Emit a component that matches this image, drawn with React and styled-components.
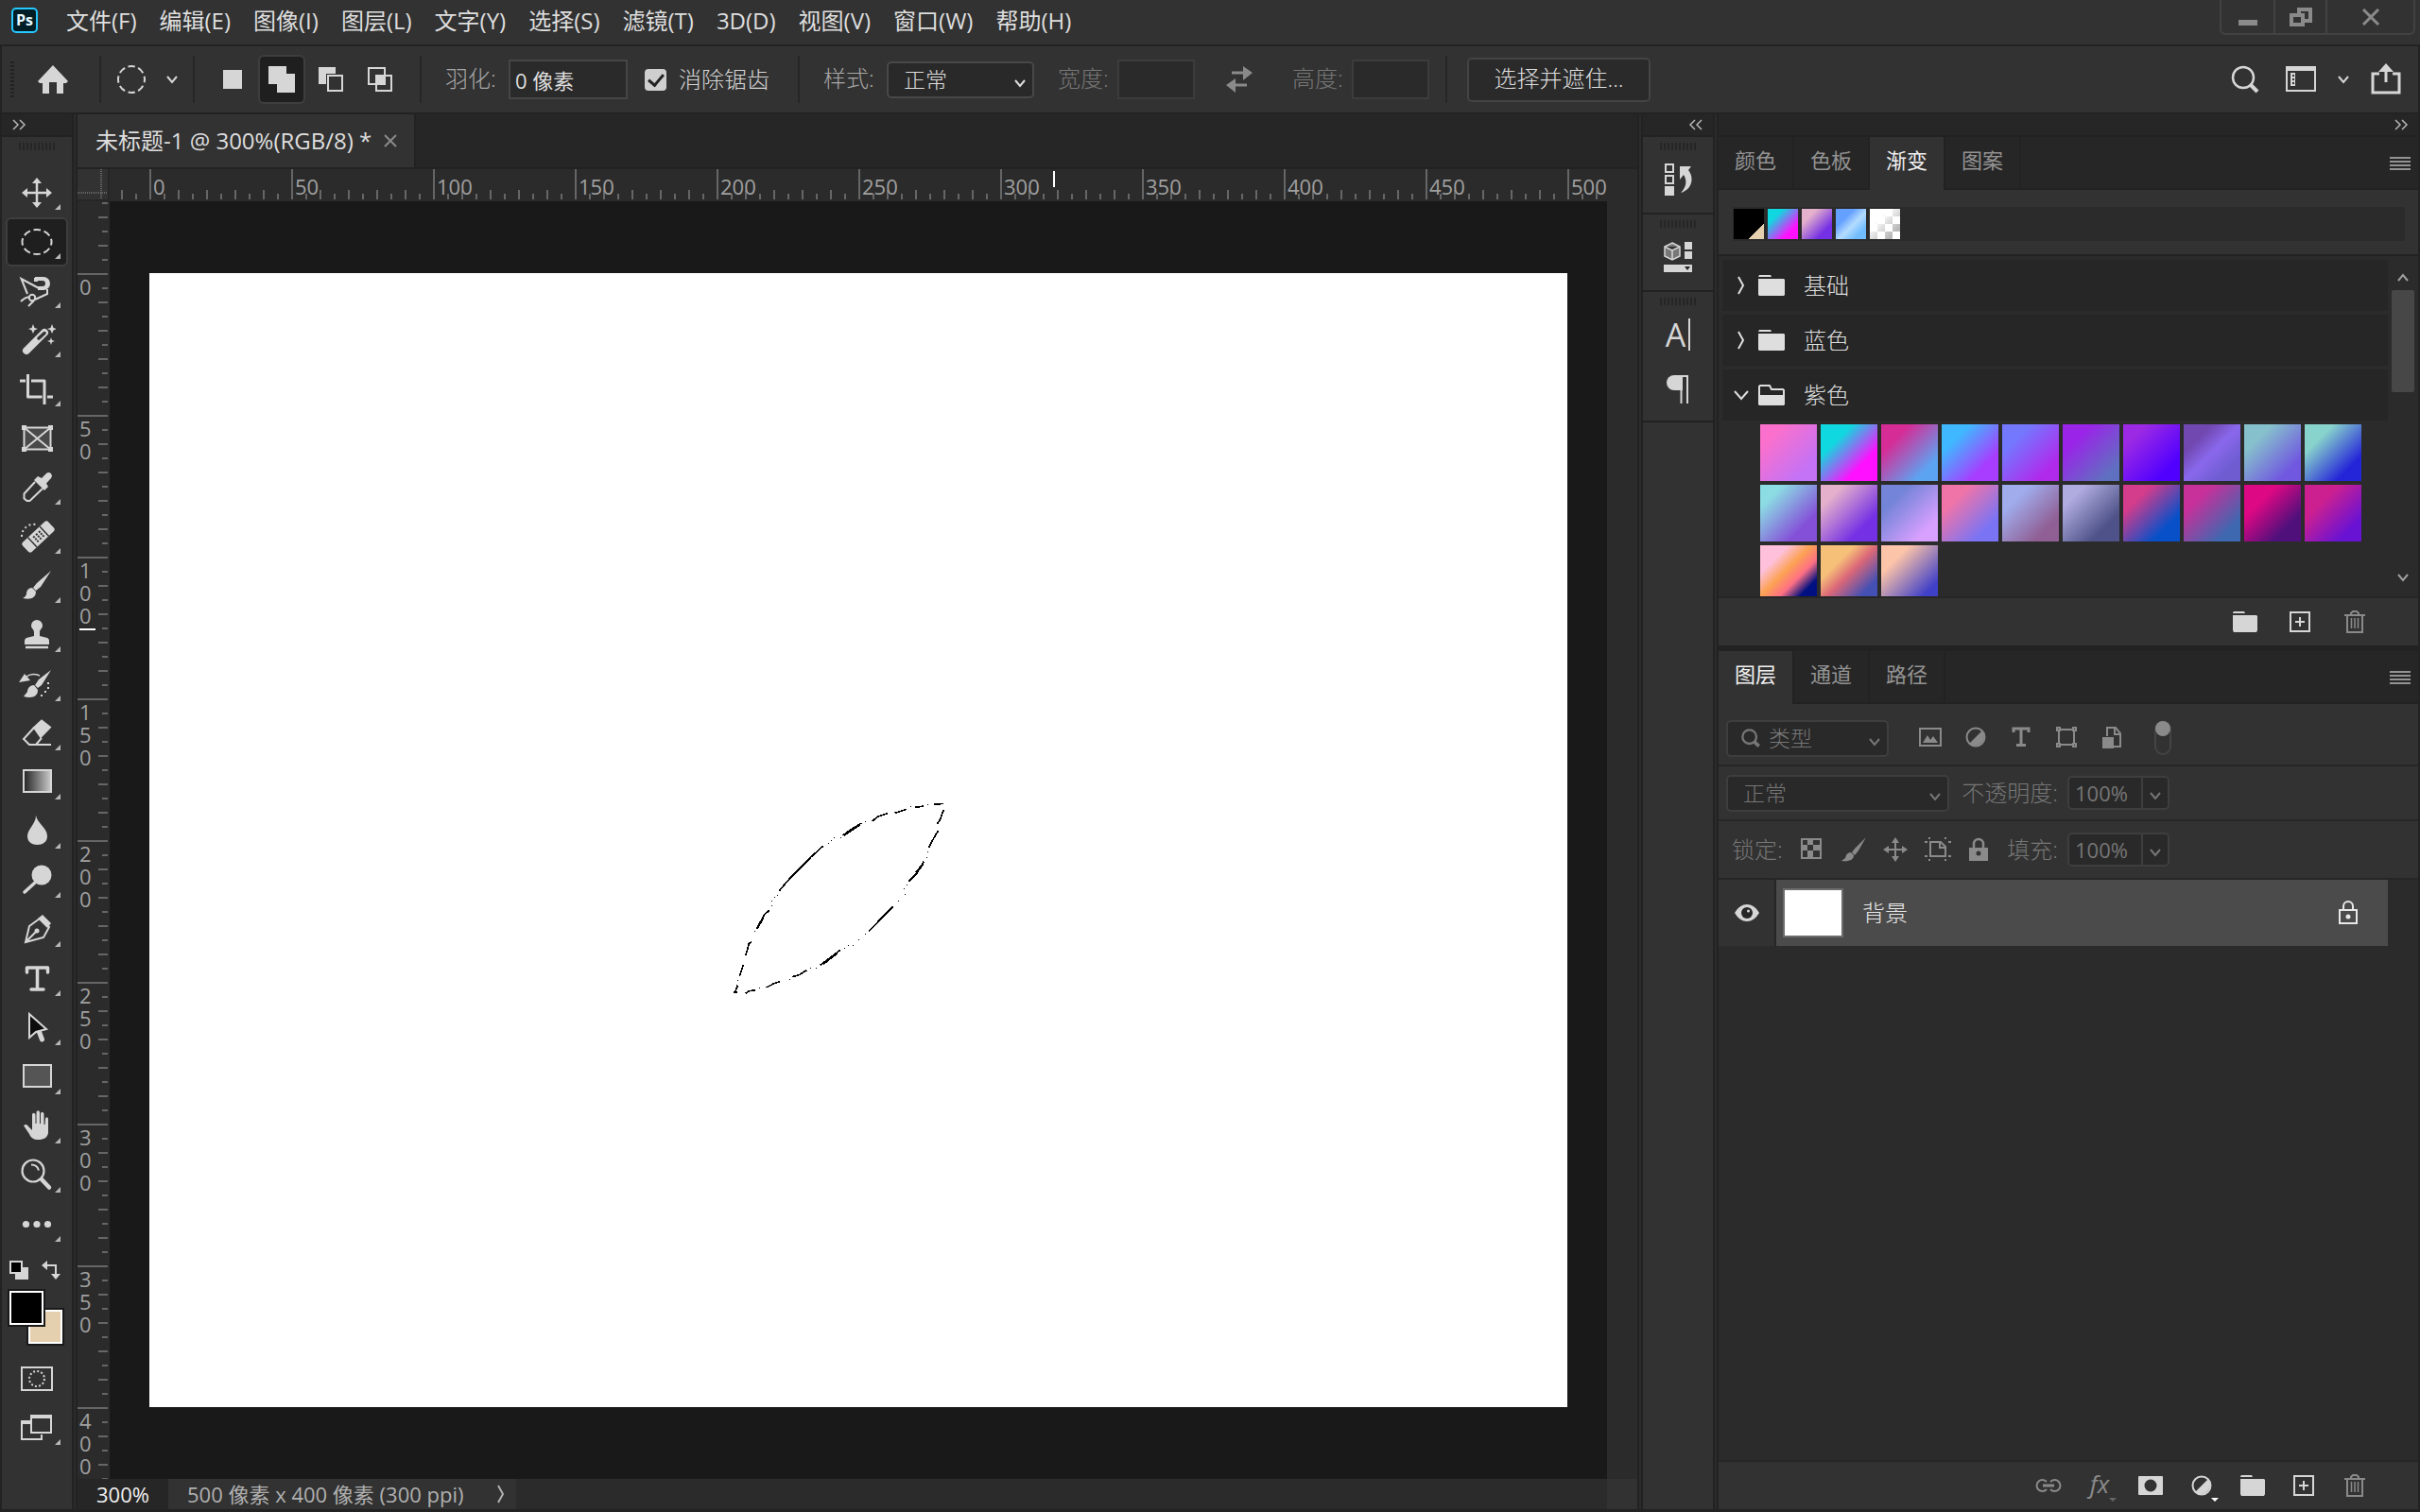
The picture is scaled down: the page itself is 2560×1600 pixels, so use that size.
import React from "react";
import styled, { createGlobalStyle, css } from "styled-components";

const colors = {
  edge: "#222222",
  dark: "#262626",
  mid: "#2b2b2b",
  panel: "#323232",
  canvas: "#191919",
  line: "#424242",
  icon: "#d6d6d6",
  dim: "#8a8a8a",
  text: "#dedede",
  label: "#a8a8a8",
  off: "#767676",
};

const menus = [
  "文件(F)",
  "编辑(E)",
  "图像(I)",
  "图层(L)",
  "文字(Y)",
  "选择(S)",
  "滤镜(T)",
  "3D(D)",
  "视图(V)",
  "窗口(W)",
  "帮助(H)",
];

const rulerX = [0, 50, 100, 150, 200, 250, 300, 350, 400, 450, 500];
const rulerY = [0, 50, 100, 150, 200, 250, 300, 350, 400];

const recents = [
  "linear-gradient(135deg, #000 74%, #e4d0ae 75%)",
  "linear-gradient(135deg, #10d8e0 25%, #ff10ff 75%)",
  "linear-gradient(135deg, #e4b0cc 25%, #7430e4 75%)",
  "linear-gradient(135deg, #64a0ff 30%, #b4dcff 55%, #70bcff 80%)",
  "linear-gradient(135deg, #fff 30%, transparent 80%), repeating-conic-gradient(#b8b8b8 0 25%, #fff 0 50%) 0 0 / 16px 16px",
];

const purples = [
  "#fb70cc 20%, #c472f6 80%",
  "#10d8e0 28%, #ff10ff 72%",
  "#d62c96 25%, #5ca4f2 80%",
  "#40b8ff 25%, #a83cff 75%",
  "#7478ff 25%, #b02aec 80%",
  "#9a24e8 25%, #6070c0 85%",
  "#9c2ae4 20%, #5000ff 80%",
  "#7048b0 25%, #8a68ec 50%, #6e5cd0 80%",
  "#86c0cc 25%, #7058e0 80%",
  "#88d4cc 25%, #2424d8 78%",
  "#8cdce4 20%, #8450d8 75%",
  "#e4b0cc 20%, #7430e4 75%",
  "#7484d8 25%, #d8a0ff 80%",
  "#f074a8 25%, #7a74f4 78%",
  "#a0acec 25%, #905f94 78%",
  "#b0ace0 20%, #4e5288 75%",
  "#d43c8c 25%, #0850c8 75%",
  "#c8309a 25%, #3e68b0 80%",
  "#dc0884 30%, #50107c 75%",
  "#cc2090 30%, #6812d4 80%",
  "#fec0da 25%, #fca254 45%, #ff7084 62%, #001080 80%",
  "#f6c078 30%, #dc6878 50%, #4450b4 80%",
  "#fcc4a8 25%, #4040c8 82%",
];

/* ---------- icons ---------- */

const Icon = ({ w = 40, h = 40, children, ...rest }) => (
  <svg width={w} height={h} viewBox={`0 0 ${w} ${h}`} fill="none" stroke="currentColor" strokeWidth="2" aria-hidden="true" {...rest}>
    {children}
  </svg>
);

const F = "currentColor";

const Chevron = () => (
  <Icon w={14} h={10} strokeWidth="2">
    <path d="M2 2l5 6 5-6" />
  </Icon>
);

const DoubleChevron = ({ left }) => (
  <Icon w={16} h={12} strokeWidth="1.5">
    <path d={left ? "M7 1L2 6l5 5M14 1L9 6l5 5" : "M2 1l5 5-5 5M9 1l5 5-5 5"} />
  </Icon>
);

const MenuLines = () => (
  <Icon w={22} h={16}>
    <path d="M0 2h22M0 6h22M0 10h22M0 14h22" />
  </Icon>
);

const FolderIcon = () => (
  <Icon w={26} h={22} stroke="none" fill={F}>
    <path d="M0 1.5L1 0h11l1 2H0zM1 4h24l1 1v15l-1 2H1l-1-2V4z" />
  </Icon>
);

const FolderWide = () => (
  <Icon w={28} h={22} stroke="none" fill={F}>
    <path d="M0 2L1 0h12l1 2zM1 4h26l1 1v16l-1 1H1l-1-1V4z" />
  </Icon>
);

const FolderOpen = () => (
  <Icon w={28} h={22}>
    <path d="M1 12V2l1-1h10l2 4h12l1 1v6" />
    <path d="M0 11h28v10l-1 1H1l-1-1z" fill={F} stroke="none" />
  </Icon>
);

const NewIcon = () => (
  <Icon w={22} h={22}>
    <path d="M1 1h20v20H1zM11 6v10M6 11h10" />
  </Icon>
);

const TrashIcon = () => (
  <Icon w={22} h={24}>
    <path d="M0 5h22M7 5V3l2-2h4l2 2v2M3 5v18h16V5" />
    <path d="M7.5 8v11M11 8v11M14.500 8v11" strokeWidth="1.500" />
  </Icon>
);

const HalfCircle = () => (
  <Icon w={22} h={22}>
    <circle cx="11" cy="11" r="9.500" />
    <path d="M18 4A10 10 0 0 1 4 18z" fill={F} stroke="none" />
  </Icon>
);

const LensIcon = ({ size = 30, bold }) => (
  <svg width={size} height={size} viewBox="0 0 30 30" fill="none" stroke="currentColor" aria-hidden="true">
    <circle cx="13" cy="13" r="11" strokeWidth={bold ? 3.5 : 2.5} />
    <path d="M20 20l8 8" strokeWidth={bold ? 5.5 : 4} />
  </svg>
);

const toolIcons = [
  [
    "移动",
    <>
      <path d="M20 8v24M8 20h24" strokeWidth="2.500" />
      <path d="M20 4l5 6H15zM20 36l5-6H15zM4 20l6-5v10zM36 20l-6-5v10z" fill={F} stroke="none" />
    </>,
  ],
  ["椭圆选框", <ellipse cx="20" cy="20" rx="15.500" ry="13" strokeDasharray="7.600 3.620" strokeDashoffset="4" />],
  [
    "磁性套索",
    <>
      <path d="M10 23L3.500 7 24 18M3 31c3-3 6-5 9-4.500M18 29l13-6v-5M17 30l-6 6" />
      <circle cx="15" cy="27" r="3.200" />
      <path d="M18 5h9a6.500 6.500 0 0 1 0 14h-6v-4h5a3 3 0 0 0 0-6h-8z" fill={F} stroke="none" />
      <path d="M18 6v3h3" />
    </>,
  ],
  [
    "魔棒",
    <>
      <path d="M9 31L28 12" strokeWidth="8" strokeLinecap="round" />
      <path d="M22 18l6-5.500" stroke={colors.panel} strokeWidth="3.500" strokeLinecap="round" />
      <path d="M16 3l1.500 4L21 8l-3.500 1.500L16 13l-1.500-3.500L11 8l3.500-1zM36 3l1.500 4L41 8l-3.500 1.500L36 13l-1.500-3.500L31 8l3.500-1zM35 17l1 3 3 1-3 1-1 3-1-3-3-1 3-1z" fill={F} stroke="none" />
    </>,
  ],
  ["裁剪", <path d="M2 11h6M10.500 4v24h15M14 11h14v25M31 28h6" strokeWidth="3" strokeLinejoin="round" />],
  [
    "图框",
    <>
      <path d="M6.500 8.500h28v23h-28z" fill="#4a4a4a" />
      <path d="M6 8l29 24M35 8L6 32" />
      <path d="M4 6h5v5H4zM32 6h5v5h-5zM4 29h5v5H4zM32 29h5v5h-5z" fill={F} stroke="none" />
    </>,
    true,
  ],
  [
    "吸管",
    <>
      <path d="M18 14L6.500 26.500v5l3 2.500h3L26 21" />
      <path d="M17 12l4-4 4 2 5-5c3-3 8 1 5 5l-5 5.500 2 3.500-4 4z" fill={F} stroke="none" />
    </>,
  ],
  [
    "修复画笔",
    <>
      <g transform="rotate(-43 21.500 20)">
        <rect x="3" y="13" width="37" height="14" rx="3" fill={F} stroke="none" />
        <path d="M13 13v14M30 13v14" stroke={colors.panel} strokeWidth="1.500" />
        <path d="M17 17h2M21 17h2M25 17h2M17 20h2M21 20h2M25 20h2M17 23h2M21 23h2M25 23h2" stroke={colors.panel} />
      </g>
      <path d="M4 20c0-9 7-14 15-13" strokeDasharray="2 3" />
    </>,
  ],
  [
    "画笔",
    <path d="M35 4L20 17l-4 5 3 3 5-4zM15 22c-5 0-6 4-6 7-1 2-2 3-4 4 8 2 14 0 14-7z" fill={F} stroke="none" />,
  ],
  [
    "仿制图章",
    <>
      <path d="M20 4a6 6 0 0 1 6 6c0 3-3 4-3 7v4l8 2q2 1 2 3v4H7v-4q0-2 2-3l8-2v-4c0-3-3-4-3-7a6 6 0 0 1 6-6z" fill={F} stroke="none" />
      <path d="M8 33h24" strokeWidth="2.500" />
    </>,
  ],
  [
    "历史记录画笔",
    <>
      <path d="M35 5L22 15l-4 6 3 3 4-3zM17 21c-5 0-7 4-7 7l-4 5c8 2 15 1 15-7z" fill={F} stroke="none" />
      <path d="M1 18L7 9l6 7z" fill={F} stroke="none" />
      <path d="M9 12c4-3 9-3 14-1" strokeWidth="1.500" />
      <path d="M32 18v2M32 23v2M29 27v2M25 31v2" />
    </>,
  ],
  [
    "橡皮擦",
    <>
      <path d="M17 14L25 6.500l9 7L24 24z" fill={F} />
      <path d="M17 14L6 26l6 6h7l6-7M12 32h23" />
    </>,
  ],
  [
    "渐变",
    <>
      <defs>
        <linearGradient id="toolGradient">
          <stop offset="0" stopColor="#222" />
          <stop offset="1" stopColor="#ccc" />
        </linearGradient>
      </defs>
      <path d="M6 7h29v23H6z" fill="url(#toolGradient)" />
    </>,
  ],
  ["模糊", <path d="M19 3c2 9 12 13 12 22 0 6-5 9-10.500 9S10 31 10 25C10 17 19 12 19 3z" fill={F} stroke="none" />],
  [
    "减淡",
    <>
      <circle cx="25" cy="14" r="10.500" fill={F} stroke="none" />
      <path d="M18 22L7 32" strokeWidth="3.500" strokeLinecap="round" />
    </>,
  ],
  [
    "钢笔",
    <>
      <path d="M23 8l10 9-6 11L8 33l4-17zM9 32l10-10" />
      <circle cx="20" cy="21" r="2.500" fill={F} stroke="none" />
      <path d="M21 8l5-4 9 9-4 5z" fill={F} stroke="none" />
    </>,
  ],
  ["横排文字", <path d="M9.500 13V8h22v5M20.500 8v23M14 31h13" strokeWidth="3.500" strokeLinecap="round" strokeLinejoin="round" />],
  [
    "路径选择",
    <>
      <path d="M21 20l4.500 12" strokeWidth="5" strokeLinecap="round" />
      <path d="M12 5v25l7-6 11-3z" fill="#0c0c0c" />
    </>,
  ],
  ["矩形", <path d="M6 7h29v23H6z" fill="#555" />],
  [
    "抓手",
    <path
      d="M6 19c2-2 4-1 5 1l4 4V8c0-3 3-3 3.500 0v9h1V5.500c0-3 3.500-3 3.500 0V17h1V7c0-3 3-3 3.500 0v11h1l.5-6c.5-2.500 3-2 3 .5L32 27c-1 5-5 7-10 7-6 0-8-2-10-6z"
      fill={F}
      stroke="none"
    />,
  ],
  [
    "缩放",
    <>
      <circle cx="16" cy="15" r="11.500" strokeWidth="2.200" />
      <path d="M14 8.500c4 0 7 2 8 6" />
      <path d="M25 24l8 8.500" strokeWidth="4.500" strokeLinecap="round" />
    </>,
  ],
  [
    "编辑工具栏",
    <g fill={F} stroke="none">
      <circle cx="8.500" cy="19.500" r="3.600" />
      <circle cx="20" cy="19.500" r="3.600" />
      <circle cx="31.500" cy="19.500" r="3.600" />
    </g>,
  ],
];

const combineIcons = [
  ["新选区", <path d="M4 4h20v20H4z" fill={F} stroke="none" />],
  ["添加到选区", <path d="M0 0h19v8h9v20H9v-9H0z" fill={F} stroke="none" />],
  [
    "从选区减去",
    <>
      <path d="M1 1h18v7H9v11H1z" fill={F} stroke="none" />
      <path d="M11 10h15v16H11z" />
    </>,
  ],
  [
    "与选区交叉",
    <>
      <path d="M2 2h17v17H2zM10 10h16v16H10z" />
      <path d="M9 9h11v11H9z" fill={F} stroke="none" />
    </>,
  ],
];

const filterIcons = [
  [
    "像素图层",
    <>
      <path d="M1 2h22v18H1z" />
      <path d="M4 17l5-8 3 5 3-4 5 7z" fill={F} stroke="none" />
    </>,
  ],
  [
    "调整图层",
    <>
      <circle cx="12" cy="11" r="9.500" />
      <path d="M19 4A10 10 0 0 1 5 18z" fill={F} stroke="none" />
    </>,
  ],
  ["文字图层", <path d="M4 6V2h16v4M12 2v17M7 19.500h10" strokeWidth="3" />],
  [
    "形状图层",
    <>
      <path d="M4 3h16v16H4z" />
      <path d="M1 0h5v5H1zM18 0h5v5h-5zM1 17h5v5H1zM18 17h5v5h-5z" fill={F} stroke="none" />
      <path d="M3 2h1v1H3zM20 2h1v1h-1zM3 19h1v1H3zM20 19h1v1h-1z" fill={colors.panel} stroke="none" />
    </>,
  ],
  [
    "智能对象",
    <>
      <path d="M7 10V1h9l5 6v14h-7M15 1v7h6" />
      <path d="M2 11h12v12H2z" fill={F} stroke="none" />
    </>,
  ],
];

const lockIcons = [
  [
    "锁定透明像素",
    <>
      <path d="M2 2h20v20H2z" />
      <path d="M8 2h6v6H8zM2 8h6v6H2zM14 8h8v6h-8zM8 14h6v7H8z" fill={F} stroke="none" />
    </>,
  ],
  ["锁定图像像素", <path d="M26 0L14 12l-3 4 3 3 4-5zM10 16c-4 0-5 3-6 6l-4 3c8 1 13-1 13-6z" fill={F} stroke="none" />],
  [
    "锁定位置",
    <>
      <path d="M13 4v18M4 13h18" />
      <path d="M13 0l4 6H9zM13 26l4-6H9zM0 13l6-4v8zM26 13l-6-4v8z" fill={F} stroke="none" />
    </>,
  ],
  [
    "防止自动嵌套",
    <>
      <path d="M6 5h11l5 5v10H6zM16 5v6h6" />
      <path d="M0 5h3M25 20h3M0 20h3M25 5h3M5 0v2M22 0v2M5 23v2M22 23v2" />
    </>,
  ],
  [
    "锁定全部",
    <>
      <path d="M8 11V7a5 5 0 0 1 10 0v4" strokeWidth="2.500" />
      <path d="M3 11h20v14H3z" fill={F} stroke="none" />
      <circle cx="13" cy="17" r="2.500" fill={colors.panel} stroke="none" />
    </>,
  ],
];

/* ---------- pieces ---------- */

function Dropdown({ id, value, width, dim, children }) {
  return (
    <SelectWrap $width={width} $dim={dim}>
      {children}
      <select id={id} aria-label={value} defaultValue={value}>
        <option>{value}</option>
      </select>
      <Chevron />
    </SelectWrap>
  );
}

function Percent({ id }) {
  return (
    <PercentBox>
      <input id={id} defaultValue="100%" />
      <button type="button" aria-label="滑块">
        <Chevron />
      </button>
    </PercentBox>
  );
}

function Toolbar() {
  return (
    <Dock>
      <DockHeader>
        <DoubleChevron />
      </DockHeader>
      <ToolPanel>
        <Grip />
        <ToolList>
          {toolIcons.map(([name, drawing, single], i) => (
            <ToolButton key={name} type="button" aria-label={name} $active={i === 1} $single={single}>
              <Icon>{drawing}</Icon>
            </ToolButton>
          ))}
        </ToolList>
        <ColorMinis>
          <Icon w={20} h={20}>
            <path d="M6 7h14v13H6z" fill={F} stroke="none" />
            <path d="M1 1h12v12H1z" fill="#000" />
          </Icon>
          <Icon w={20} h={20}>
            <path d="M4 5h11v10" />
            <path d="M0 5l6-5v10zM15 20l-5-6h10z" fill={F} stroke="none" />
          </Icon>
        </ColorMinis>
        <Swatches>
          <ColorChip type="button" $color="#e4d0ae" $back aria-label="背景色" />
          <ColorChip type="button" $color="#000" aria-label="前景色" />
        </Swatches>
        <ToolButton type="button" aria-label="快速蒙版" $single>
          <Icon>
            <path d="M4 8h32v24H4z" />
            <circle cx="20" cy="20" r="8" strokeDasharray="2 2.190" />
          </Icon>
        </ToolButton>
        <ToolButton type="button" aria-label="屏幕模式">
          <Icon>
            <path d="M12 14H4v18h21v-5" />
            <path d="M3 12h10v4H3zM13 6h23v4H13z" fill={F} stroke="none" />
            <path d="M14 7h21v18H14z" />
          </Icon>
        </ToolButton>
      </ToolPanel>
    </Dock>
  );
}

function OptionsBar() {
  return (
    <Options>
      <OptionsGrip />
      <HomeButton type="button" aria-label="主页">
        <Icon w={32} h={30} stroke="none" fill={F}>
          <path d="M16 0l16 17-2 2h-3v11h-7V18h-8v12H5V19H2l-2-2z" />
        </Icon>
      </HomeButton>
      <Divider />
      <CurrentTool type="button" aria-label="当前工具">
        <Icon w={32} h={32}>
          <circle cx="16" cy="16" r="14" strokeDasharray="7.400 3.600" strokeDashoffset="4" />
        </Icon>
        <Chevron />
      </CurrentTool>
      <Divider />
      <CombineGroup>
        {combineIcons.map(([name, drawing], i) => (
          <CombineButton key={name} type="button" aria-label={name} $active={i === 1}>
            <Icon w={28} h={28}>
              {drawing}
            </Icon>
          </CombineButton>
        ))}
      </CombineGroup>
      <Divider />
      <OptionGroup>
        <FieldLabel htmlFor="feather">羽化:</FieldLabel>
        <OptionInput id="feather" defaultValue="0 像素" $width={126} />
        <CheckLabel>
          <input type="checkbox" defaultChecked />
          消除锯齿
        </CheckLabel>
      </OptionGroup>
      <Divider />
      <OptionGroup>
        <FieldLabel htmlFor="style">样式:</FieldLabel>
        <Dropdown id="style" value="正常" width={156} />
        <FieldLabel htmlFor="selWidth" $off>
          宽度:
        </FieldLabel>
        <OptionInput id="selWidth" disabled $width={82} />
        <SwapButton type="button" aria-label="互换宽高">
          <Icon w={28} h={28} strokeWidth="3">
            <path d="M6 7h14M8 20h14" />
            <path d="M18 0l10 7-10 8zM10 13L0 20l10 8z" fill={F} stroke="none" />
          </Icon>
        </SwapButton>
        <FieldLabel htmlFor="selHeight" $off>
          高度:
        </FieldLabel>
        <OptionInput id="selHeight" disabled $width={82} />
      </OptionGroup>
      <Divider />
      <MaskButton type="button">选择并遮住...</MaskButton>
      <RightTools>
        <LensIcon />
        <Icon w={34} h={28}>
          <path d="M2 2h30v24H2z" />
          <path d="M1 0h32v5H1z" fill={F} stroke="none" />
          <path d="M6 7h5v14H6z" fill={F} stroke="none" />
          <path d="M8 10h2M8 14h2M8 18h2" stroke={colors.panel} />
        </Icon>
        <Chevron />
        <Icon w={34} h={34} strokeWidth="3">
          <path d="M10 11H3v20h28V11h-7M17 20V6" />
          <path d="M17 0l8 9H9z" fill={F} stroke="none" />
        </Icon>
      </RightTools>
    </Options>
  );
}

function Selection() {
  const dashes =
    "M112 692l9-24M127 640l12-37M147 572l10-37 8-5M181 490l24-45 16-15M253 368l39-46 58-58 42-38M455 192l23-17 36-22M548 147l17-14 31-11M620 121l37-12M685 103l26-4M745 94l28-3M775 110l-12 33-8 12M757 178l-20 34-9 18M712 275l-22 37-26 26M614 418l-77 78M446 556l-28 22-35 26M340 620l-22 14-23 7M256 656l-21 7-23 12M178 683l-20 3-12 8";
  const dots = [
    [119, 650], [173, 495], [229, 415], [227, 398], [236, 386], [246, 380], [407, 217], [416, 207], [425, 199], [446, 199],
    [524, 147], [668, 100], [722, 92], [722, 242], [721, 260], [658, 349], [648, 360], [650, 379], [631, 398], [524, 505],
    [505, 523], [487, 541], [470, 539], [458, 549], [368, 613], [350, 612], [286, 648], [188, 675],
  ];
  return (
    <Marquee viewBox="0 0 900 780" fill="none" stroke="#000" shapeRendering="crispEdges">
      <path d={dashes} strokeWidth="5" />
      <path d="M290 324l62-60M458 192l50-34M185 484l16-30M708 284l-20 26M436 566l-44 34M109 690h12" strokeWidth="7" />
      {dots.map(([x, y]) => (
        <rect key={`${x}-${y}`} x={x} y={y} width="3" height="3" fill="#000" stroke="none" />
      ))}
    </Marquee>
  );
}

function Document() {
  return (
    <DocumentArea>
      <DocTabs>
        <DocTab>
          未标题-1 @ 300%(RGB/8) *
          <button type="button" aria-label="关闭">
            <Icon w={14} h={14}>
              <path d="M1 1l12 12M13 1L1 13" />
            </Icon>
          </button>
        </DocTab>
      </DocTabs>
      <DocGrid>
        <RulerCorner />
        <TopRuler>
          {rulerX.map((n) => (
            <span key={n}>{n}</span>
          ))}
          <TopMarker />
        </TopRuler>
        <ScrollTrack />
        <LeftRuler>
          {rulerY.map((n) => (
            <span key={n}>{n}</span>
          ))}
          <LeftMarker />
        </LeftRuler>
        <Pasteboard>
          <Artboard>
            <Selection />
          </Artboard>
        </Pasteboard>
        <ScrollTrack />
      </DocGrid>
      <StatusBar>
        <ZoomLevel>300%</ZoomLevel>
        <DocInfo>
          500 像素 x 400 像素 (300 ppi)
          <Icon w={8} h={20}>
            <path d="M1 1l5 9-5 9" />
          </Icon>
        </DocInfo>
        <StatusEnd />
      </StatusBar>
    </DocumentArea>
  );
}

function IconDock() {
  return (
    <Dock>
      <DockHeader $right>
        <DoubleChevron left />
      </DockHeader>
      <IconPanel>
        <Grip />
        <button type="button" aria-label="历史记录">
          <Icon w={32} h={36}>
            <path d="M3 2h8v8H3zM3 14h8v8H3z" />
            <path d="M2 25h10v10H2z" fill={F} stroke="none" />
            <path d="M18 4h12l-3 4c6 7 5 20-8 24 6-6 7-13 3-19l-4 5z" fill={F} stroke="none" />
          </Icon>
        </button>
      </IconPanel>
      <IconPanel>
        <Grip />
        <button type="button" aria-label="库">
          <Icon w={32} h={36}>
            <path d="M10 3l8 4v10l-8 4-8-4V7zM2 7l8 4 8-4M10 11v10" fill="#777" strokeWidth="1.500" />
            <path d="M23 2h8v8h-8zM23 12h8v8h-8zM1 26h30v8H1z" fill={F} stroke="none" />
            <path d="M23 28h6l-3 4z" fill="#222" stroke="none" />
          </Icon>
        </button>
      </IconPanel>
      <IconPanel>
        <Grip />
        <CharacterButton type="button" aria-label="字符">
          A
        </CharacterButton>
        <button type="button" aria-label="段落">
          <Icon w={32} h={36}>
            <path d="M21 3H12a8 8 0 0 0 0 16h9z" fill={F} stroke="none" />
            <path d="M19.500 4v29M26 3v30M12 4h15" />
          </Icon>
        </button>
      </IconPanel>
      <DockFill />
    </Dock>
  );
}

function GradientPanel() {
  return (
    <Panel>
      <TabRow>
        <Tab type="button">颜色</Tab>
        <Tab type="button">色板</Tab>
        <Tab type="button" $active>
          渐变
        </Tab>
        <Tab type="button">图案</Tab>
        <TabMenu type="button" aria-label="面板菜单">
          <MenuLines />
        </TabMenu>
      </TabRow>
      <RecentBox>
        <RecentStrip>
          {recents.map((g) => (
            <RecentSwatch key={g} $fill={g} />
          ))}
        </RecentStrip>
      </RecentBox>
      <ListArea>
        <List>
          {["基础", "蓝色", "紫色"].map((name, i) => (
            <GroupRow key={name} type="button">
              <Icon w={16} h={20}>
                <path d={i === 2 ? "M1 6l7 8 7-8" : "M5 1l5 9-5 9"} />
              </Icon>
              {i === 2 ? <FolderOpen /> : <FolderWide />}
              {name}
            </GroupRow>
          ))}
          <SwatchGrid>
            {purples.map((g) => (
              <GradientSwatch key={g} $stops={g} />
            ))}
          </SwatchGrid>
        </List>
        <Scrollbar>
          <Icon w={14} h={10}>
            <path d="M2 8l5-6 5 6" />
          </Icon>
          <Thumb />
          <Chevron />
        </Scrollbar>
      </ListArea>
      <PanelFooter $gap={34}>
        <FooterButton type="button" aria-label="新建组">
          <FolderIcon />
        </FooterButton>
        <FooterButton type="button" aria-label="新建渐变">
          <NewIcon />
        </FooterButton>
        <FooterButton type="button" aria-label="删除渐变" $off>
          <TrashIcon />
        </FooterButton>
      </PanelFooter>
    </Panel>
  );
}

function LayersPanel() {
  return (
    <Panel $grow>
      <TabRow>
        <Tab type="button" $active>
          图层
        </Tab>
        <Tab type="button">通道</Tab>
        <Tab type="button">路径</Tab>
        <TabMenu type="button" aria-label="面板菜单">
          <MenuLines />
        </TabMenu>
      </TabRow>
      <LayerRow $height={66} $top={8}>
        <Dropdown id="kind" value="类型" width={172} dim>
          <LensIcon size={20} bold />
        </Dropdown>
        <FilterIcons>
          {filterIcons.map(([name, drawing]) => (
            <button key={name} type="button" aria-label={name}>
              <Icon w={24} h={24}>
                {drawing}
              </Icon>
            </button>
          ))}
        </FilterIcons>
        <Toggle type="button" aria-label="打开或关闭图层滤镜" />
      </LayerRow>
      <LayerRow $height={58}>
        <Dropdown id="blend" value="正常" width={236} dim />
        <LayerLabel htmlFor="opacity">不透明度:</LayerLabel>
        <Percent id="opacity" />
      </LayerRow>
      <LayerRow $height={62}>
        <LockLabel>锁定:</LockLabel>
        <LockIcons>
          {lockIcons.map(([name, drawing]) => (
            <button key={name} type="button" aria-label={name}>
              <Icon w={28} h={26}>
                {drawing}
              </Icon>
            </button>
          ))}
        </LockIcons>
        <LayerLabel htmlFor="fill">填充:</LayerLabel>
        <Percent id="fill" />
      </LayerRow>
      <LayerList>
        <EyeCell type="button" aria-label="可见性">
          <Icon w={26} h={18} stroke="none" fill={F}>
            <path d="M0 9C7-3 19-3 26 9 19 21 7 21 0 9z" />
            <circle cx="13" cy="9" r="6" fill={colors.dark} />
            <circle cx="14.500" cy="7" r="1.500" />
          </Icon>
        </EyeCell>
        <LayerItem>
          <LayerThumb />
          背景
          <Icon w={22} h={26}>
            <path d="M6 10V6a5 5 0 0 1 10 0v4M2 10h18v14H2z" />
            <circle cx="11" cy="17" r="2.500" fill={F} stroke="none" />
          </Icon>
        </LayerItem>
      </LayerList>
      <LayerSpace />
      <PanelFooter $gap={30}>
        <FooterButton type="button" aria-label="链接图层" $off>
          <Icon w={28} h={16}>
            <path d="M12 4A6 6 0 1 0 12 12M16 4a6 6 0 1 1 0 8" />
            <path d="M8 8h12" strokeWidth="3" />
          </Icon>
        </FooterButton>
        <FooterButton type="button" aria-label="图层样式" $off $menu>
          <em>fx</em>
        </FooterButton>
        <FooterButton type="button" aria-label="添加蒙版">
          <Icon w={26} h={20} stroke="none">
            <rect width="26" height="20" rx="1" fill={F} />
            <circle cx="13" cy="10" r="6.500" fill={colors.panel} />
          </Icon>
        </FooterButton>
        <FooterButton type="button" aria-label="调整图层" $menu>
          <HalfCircle />
        </FooterButton>
        <FooterButton type="button" aria-label="新建组">
          <FolderIcon />
        </FooterButton>
        <FooterButton type="button" aria-label="新建图层">
          <NewIcon />
        </FooterButton>
        <FooterButton type="button" aria-label="删除图层" $off>
          <TrashIcon />
        </FooterButton>
      </PanelFooter>
    </Panel>
  );
}

function App() {
  return (
    <>
      <GlobalStyle />
      <Window>
        <MenuBar>
          <Logo>Ps</Logo>
          {menus.map((m) => (
            <MenuItem key={m} type="button">
              {m}
            </MenuItem>
          ))}
          <WindowButtons>
            <button type="button" aria-label="最小化">
              <Icon w={20} h={20} stroke="none" fill={F}>
                <path d="M0 13h20v6H0z" />
              </Icon>
            </button>
            <button type="button" aria-label="还原">
              <Icon w={24} h={22} strokeWidth="4">
                <path d="M10 8V3h12v12h-6M2 9h12v10H2z" />
              </Icon>
            </button>
            <button type="button" aria-label="关闭">
              <Icon w={20} h={18} strokeWidth="3">
                <path d="M2 1l16 16M18 1L2 17" />
              </Icon>
            </button>
          </WindowButtons>
        </MenuBar>
        <OptionsBar />
        <Workspace>
          <Toolbar />
          <Document />
          <IconDock />
          <Dock>
            <DockHeader $right>
              <DoubleChevron />
            </DockHeader>
            <GradientPanel />
            <LayersPanel />
          </Dock>
        </Workspace>
      </Window>
    </>
  );
}

/* ---------- styles ---------- */

const GlobalStyle = createGlobalStyle`
  * {
    box-sizing: border-box;
  }
  body {
    margin: 0;
    background: ${colors.edge};
    color: ${colors.text};
    font: 24px/32px "Open Sans", "Noto Sans CJK SC", sans-serif;
  }
  button, input, select {
    margin: 0;
    padding: 0;
    border: 0;
    border-radius: 0;
    background: none;
    color: inherit;
    font: inherit;
  }
  svg {
    display: block;
    flex: none;
  }
`;

const Window = styled.div`
  display: flex;
  flex-direction: column;
  height: 100vh;
  overflow: hidden;
  padding-bottom: 3px;
`;

const MenuBar = styled.nav`
  display: flex;
  flex: none;
  height: 47px;
  padding-left: 12px;
  padding-right: 5px;
  background: ${colors.panel};
`;

const Logo = styled.div`
  width: 28px;
  height: 27px;
  margin: 8px 18px 0 0;
  border: 2px solid #26c9ff;
  border-radius: 5px;
  background: #001e26;
  color: #e8faff;
  font-size: 16px;
  font-weight: 700;
  line-height: 22px;
  text-align: center;
`;

const MenuItem = styled.button`
  padding: 0 12px 3px;
  height: 47px;
  white-space: nowrap;
`;

const WindowButtons = styled.div`
  display: flex;
  height: 37px;
  margin-left: auto;
  border: 2px solid ${colors.line};
  border-top: 0;
  border-radius: 0 0 6px 6px;
  color: ${colors.dim};

  button {
    display: flex;
    align-items: center;
    justify-content: center;
    width: 55px;
  }
  button + button {
    border-left: 2px solid ${colors.line};
  }
  button:last-child {
    width: 93px;
  }
`;

const Options = styled.div`
  display: flex;
  align-items: center;
  flex: none;
  height: 70px;
  margin: 2px;
  padding-left: 9px;
  background: ${colors.panel};
  color: ${colors.icon};
`;

const OptionsGrip = styled.div`
  width: 4px;
  height: 38px;
  background: repeating-linear-gradient(${colors.edge} 0 2px, transparent 2px 4px);
`;

const HomeButton = styled.button`
  display: flex;
  justify-content: center;
  width: 82px;
  margin-right: 8px;
`;

const Divider = styled.div`
  flex: none;
  width: 2px;
  height: 50px;
  background: ${colors.dark};
`;

const CurrentTool = styled.button`
  display: flex;
  align-items: center;
  gap: 20px;
  padding: 0 15px 0 16px;
`;

const CombineGroup = styled.div`
  display: flex;
  gap: 2px;
  padding: 0 17px 0 15px;
`;

const activeBox = css`
  border: 2px solid #3e3e3e;
  border-radius: 6px;
  background: #1f1f1f;
`;

const CombineButton = styled.button`
  display: flex;
  align-items: center;
  justify-content: center;
  width: 50px;
  height: 52px;
  ${({ $active }) => $active && activeBox}
`;

const OptionGroup = styled.div`
  display: flex;
  align-items: center;
  padding: 0 17px 0 25px;
`;

const FieldLabel = styled.label`
  width: ${({ $off }) => ($off ? 63 : 67)}px;
  margin-left: ${({ $off }) => ($off ? 25 : 0)}px;
  padding-bottom: 3px;
  color: ${({ $off }) => ($off ? colors.off : colors.label)};
  font-weight: 300;
`;

const OptionInput = styled.input`
  width: ${({ $width }) => $width}px;
  height: 42px;
  padding-left: 5px;
  border: 2px solid ${({ disabled }) => (disabled ? "#3c3c3c" : "#464646")};
  background: #2a2a2a;
  color: ${colors.text};
  font-size: 22px;
`;

const CheckLabel = styled.label`
  display: flex;
  align-items: center;
  gap: 13px;
  margin: 0 13px 0 18px;
  font-weight: 300;

  input {
    appearance: none;
    display: grid;
    place-items: center;
    width: 23px;
    height: 23px;
    border-radius: 4px;
    background: #cfcfcf;
  }
  input:checked::after {
    content: "";
    width: 7px;
    height: 13px;
    margin-bottom: 3px;
    border: solid #222;
    border-width: 0 3px 3px 0;
    rotate: 40deg;
  }
`;

const SelectWrap = styled.div`
  position: relative;
  display: flex;
  align-items: center;
  width: ${({ $width }) => $width}px;
  height: 39px;
  padding-left: 14px;
  border: 2px solid ${({ $dim }) => ($dim ? "#3e3e3e" : "#484848")};
  border-radius: 5px;
  background: #292929;
  color: ${({ $dim }) => ($dim ? colors.off : colors.text)};
  font-size: 23px;
  font-weight: 300;

  select {
    appearance: none;
    flex: 1;
    height: 100%;
    padding-left: 2px;
    outline: 0;
  }
  svg + select {
    padding-left: 9px;
  }
  select + svg {
    position: absolute;
    right: 6px;
    top: 16px;
    pointer-events: none;
  }
`;

const SwapButton = styled.button`
  margin: 0 17px 0 33px;
  color: ${colors.dim};
`;

const MaskButton = styled.button`
  width: 194px;
  height: 47px;
  margin-left: 21px;
  padding-bottom: 2px;
  border: 2px solid #444;
  border-radius: 5px;
  background: #2a2a2a;
  color: ${colors.text};
  font-weight: 300;
`;

const RightTools = styled.div`
  display: flex;
  align-items: center;
  gap: 21px;
  margin-left: auto;
  padding-right: 17px;

  svg:first-child {
    margin-right: 6px;
  }
`;

const Workspace = styled.div`
  display: grid;
  grid-template-columns: 74px minmax(0, 1fr) 74px 740px;
  gap: 6px;
  flex: 1;
  min-height: 0;
  padding: 0 2px;
  background: ${colors.mid};
`;

const Dock = styled.aside`
  display: flex;
  flex-direction: column;
  gap: 2px;
  min-height: 0;
  background: ${colors.edge};
  box-shadow: 0 0 0 2px ${colors.edge};
`;

const DockHeader = styled.div`
  display: flex;
  align-items: center;
  justify-content: ${({ $right }) => ($right ? "flex-end" : "flex-start")};
  flex: none;
  height: 22px;
  padding: 0 10px;
  background: ${colors.dark};
  color: #b4b4b4;
`;

const Grip = styled.div`
  width: 38px;
  height: 8px;
  margin: 6px auto 0;
  background: repeating-linear-gradient(to right, ${colors.dark} 0 2px, transparent 2px 4px);
`;

const ToolPanel = styled.div`
  flex: 1;
  min-height: 0;
  background: ${colors.panel};
  color: ${colors.icon};
`;

const ToolList = styled.div`
  padding-top: 19px;
`;

const ToolButton = styled.button`
  display: flex;
  align-items: center;
  justify-content: center;
  position: relative;
  width: 66px;
  height: 52px;
  margin: 0 auto 0 4px;
  border: 2px solid transparent;
  ${({ $active }) => $active && activeBox}

  &::after {
    content: "";
    display: ${({ $single }) => ($single ? "none" : "block")};
    position: absolute;
    right: 6px;
    bottom: 6px;
    border-left: 6px solid transparent;
    border-bottom: 6px solid #b8b8b8;
  }
`;

const ColorMinis = styled.div`
  display: flex;
  justify-content: space-between;
  padding: 12px 12px 0 8px;
`;

const Swatches = styled.div`
  position: relative;
  width: 60px;
  height: 60px;
  margin: 10px 0 9px 6px;
`;

const ColorChip = styled.button`
  position: absolute;
  left: ${({ $back }) => ($back ? 20 : 0)}px;
  top: ${({ $back }) => ($back ? 20 : 0)}px;
  width: 40px;
  height: 40px;
  border: 2px solid #191919;
  background: ${({ $color }) => $color};
  box-shadow: inset 0 0 0 2px #fff;
`;

const DocumentArea = styled.main`
  display: flex;
  flex-direction: column;
  min-width: 0;
  min-height: 0;
  background: ${colors.edge};
  box-shadow: 0 0 0 2px ${colors.edge};
`;

const DocTabs = styled.div`
  flex: none;
  display: flex;
  height: 56px;
  margin-bottom: 2px;
  background: ${colors.dark};
`;

const DocTab = styled.div`
  display: flex;
  align-items: center;
  gap: 13px;
  padding: 0 18px 0 19px;
  border-right: 2px solid ${colors.edge};
  background: ${colors.panel};
  white-space: nowrap;

  button {
    color: ${colors.dim};
  }
`;

const DocGrid = styled.div`
  display: grid;
  grid-template: 34px minmax(0, 1fr) / 34px minmax(0, 1fr) 32px;
  flex: 1;
  min-height: 0;
`;

const RulerCorner = styled.div`
  border: solid ${colors.dark};
  border-width: 0 2px 2px 0;
  background:
    repeating-linear-gradient(#666 0 1px, transparent 1px 2px) 24px 0 / 2px 100% no-repeat,
    repeating-linear-gradient(to right, #666 0 1px, transparent 1px 2px) 0 24px / 100% 2px no-repeat,
    ${colors.panel};
`;

const tick = "#666";

const TopRuler = styled.div`
  position: relative;
  display: flex;
  padding: 0 0 2px 42px;
  overflow: hidden;
  background:
    linear-gradient(to right, ${tick} 2px, transparent 2px) left 12px bottom 2px / 30px 10px repeat-x,
    linear-gradient(to right, ${tick} 2px, transparent 2px) left 12px bottom 2px / 15px 6px repeat-x,
    ${colors.mid};
  color: #a0a0a0;
  font-size: 22px;

  span {
    flex: 0 0 150px;
    padding: 2px 0 0 2px;
    border-left: 2px solid ${tick};
  }
`;

const TopMarker = styled.i`
  position: absolute;
  left: 998px;
  top: 2px;
  width: 2px;
  height: 17px;
  background: #fff;
`;

const LeftRuler = styled.div`
  position: relative;
  display: flex;
  flex-direction: column;
  padding: 76px 2px 0 0;
  overflow: hidden;
  background:
    linear-gradient(${tick} 2px, transparent 2px) right 2px top 16px / 10px 30px repeat-y,
    linear-gradient(${tick} 2px, transparent 2px) right 2px top 16px / 6px 15px repeat-y,
    ${colors.mid};
  color: #a0a0a0;
  font-size: 22px;

  /* one digit per line */
  span {
    flex: 0 0 150px;
    padding: 0 14px 0 2px;
    border-top: 2px solid ${tick};
    line-height: 24px;
    word-break: break-all;
  }
`;

const LeftMarker = styled.i`
  position: absolute;
  left: 2px;
  top: 452px;
  width: 17px;
  height: 2px;
  background: #fff;
`;

const ScrollTrack = styled.div`
  background: ${colors.mid};
`;

const Pasteboard = styled.div`
  padding: 76px 42px 0;
  overflow: hidden;
  background: ${colors.canvas};
`;

const Artboard = styled.div`
  position: relative;
  width: 100%;
  aspect-ratio: 5 / 4;
  background: #fff;
`;

const Marquee = styled.svg`
  position: absolute;
  left: 582px;
  top: 531px;
  width: 300px;
  height: 260px;
`;

const StatusBar = styled.footer`
  display: flex;
  flex: none;
  height: 32px;
  background: ${colors.mid};
  font-size: 22px;
`;

const ZoomLevel = styled.div`
  width: 96px;
  padding-left: 20px;
  background: ${colors.dark};
  color: #f0f0f0;
`;

const DocInfo = styled.div`
  display: flex;
  align-items: center;
  gap: 36px;
  padding: 0 12px 0 20px;
  background: ${colors.panel};
  color: #b0b0b0;
  white-space: nowrap;
`;

const StatusEnd = styled.div`
  width: 32px;
  margin-left: auto;
  background: ${colors.panel};
`;

const IconPanel = styled.div`
  display: flex;
  flex-direction: column;
  flex: none;
  padding-bottom: 6px;
  background: ${colors.panel};
  color: ${colors.icon};

  button {
    display: flex;
    align-items: center;
    justify-content: center;
    width: 100%;
    height: 58px;
    margin-top: 2px;
  }
  button + button {
    height: 54px;
  }
`;

const CharacterButton = styled.button`
  gap: 3px;
  font-size: 34px;

  &::after {
    content: "";
    width: 2px;
    height: 34px;
    background: ${colors.icon};
  }
`;

const DockFill = styled.div`
  flex: 1;
  background: ${colors.panel};
`;

const Panel = styled.section`
  display: flex;
  flex-direction: column;
  flex: ${({ $grow }) => ($grow ? "1" : "none")};
  min-height: 0;
  margin-bottom: ${({ $grow }) => ($grow ? 0 : 4)}px;
  background: ${colors.panel};
`;

const TabRow = styled.div`
  display: flex;
  flex: none;
  height: 56px;
  background: ${colors.dark};
  box-shadow: inset 0 -2px ${colors.edge};
  font-size: 22px;
`;

const Tab = styled.button`
  width: 80px;
  padding: 0 0 9px;
  border-right: 2px solid ${colors.edge};
  color: ${({ $active }) => ($active ? "#f0f0f0" : "#939393")};
  ${({ $active }) => $active && `background: ${colors.panel};`}
`;

const TabMenu = styled.button`
  margin: 0 8px 0 auto;
  color: #939393;
`;

const RecentBox = styled.div`
  flex: none;
  padding: 18px 14px 14px 15px;
  border-bottom: 2px solid ${colors.edge};
`;

const RecentStrip = styled.div`
  display: flex;
  gap: 4px;
  height: 36px;
  padding: 2px 1px;
  background: ${colors.mid};
`;

const RecentSwatch = styled.div`
  width: 32px;
  height: 32px;
  background: ${({ $fill }) => $fill};
`;

const ListArea = styled.div`
  display: flex;
  height: 360px;
  background: ${colors.mid};
`;

const List = styled.div`
  flex: 1;
  padding: 4px 0 0 4px;
  overflow: hidden;
`;

const GroupRow = styled.button`
  display: flex;
  align-items: center;
  width: 100%;
  height: 54px;
  margin-bottom: 4px;
  padding-left: 12px;
  background: ${colors.dark};
  color: ${colors.text};
  font-weight: 300;

  svg + svg {
    margin: 0 20px 0 10px;
  }
`;

const SwatchGrid = styled.div`
  display: grid;
  grid-template-columns: repeat(10, 60px);
  gap: 4px;
  padding-left: 40px;
`;

const GradientSwatch = styled.div`
  height: 60px;
  background: linear-gradient(135deg, ${({ $stops }) => $stops});
`;

const Scrollbar = styled.div`
  display: flex;
  flex-direction: column;
  align-items: center;
  width: 32px;
  padding: 18px 0 15px;
  background: ${colors.mid};
  color: #a0a0a0;

  svg:last-child {
    margin-top: auto;
  }
`;

const Thumb = styled.div`
  width: 24px;
  height: 108px;
  margin-top: 8px;
  border-radius: 2px;
  background: #474747;
`;

const PanelFooter = styled.div`
  display: flex;
  align-items: center;
  justify-content: flex-end;
  gap: ${({ $gap }) => $gap}px;
  flex: none;
  height: 52px;
  padding-right: 55px;
  border-top: 2px solid ${colors.dark};
  background: ${colors.panel};
`;

const FooterButton = styled.button`
  position: relative;
  display: flex;
  align-items: center;
  justify-content: center;
  width: 24px;
  height: 32px;
  color: ${({ $off }) => ($off ? colors.dim : colors.icon)};

  em {
    padding-bottom: 4px;
    font-size: 26px;
  }
  &::after {
    content: "";
    display: ${({ $menu }) => ($menu ? "block" : "none")};
    position: absolute;
    right: -6px;
    bottom: -1px;
    border: 4px solid transparent;
    border-bottom: 0;
    border-top-color: ${({ $off }) => ($off ? "#666" : "#fff")};
  }
`;

const LayerRow = styled.div`
  display: flex;
  align-items: center;
  flex: none;
  height: ${({ $height }) => $height}px;
  padding: ${({ $top }) => $top || 0}px 0 0 8px;
  border-bottom: 2px solid ${colors.dark};
  color: ${colors.off};
`;

const FilterIcons = styled.div`
  display: flex;
  gap: 24px;
  margin-left: 32px;
  color: ${colors.dim};
`;

const Toggle = styled.button`
  width: 18px;
  height: 36px;
  margin-left: 33px;
  border: 2px solid #444;
  border-radius: 9px;

  &::before {
    content: "";
    display: block;
    width: 16px;
    height: 16px;
    margin: -18px 0 0 -1px;
    border-radius: 50%;
    background: ${colors.dim};
  }
`;

const LayerLabel = styled.label`
  margin: 0 10px 0 auto;
  font-weight: 300;

  & + div {
    margin-right: 263px;
  }
`;

const PercentBox = styled.div`
  display: flex;
  width: 108px;
  height: 36px;
  border: 2px solid #3e3e3e;
  border-radius: 5px;
  background: #292929;
  font-size: 22px;

  input {
    width: 78px;
    padding-left: 6px;
    border-right: 2px solid #3e3e3e;
  }
  button {
    display: grid;
    place-items: center;
    flex: 1;
    padding-top: 6px;
  }
`;

const LockLabel = styled.span`
  margin-left: 6px;
  font-weight: 300;
`;

const LockIcons = styled.div`
  display: flex;
  gap: 16px;
  margin-left: 18px;
  color: ${colors.dim};
`;

const LayerList = styled.div`
  display: flex;
  flex: none;
  height: 70px;
  padding-right: 32px;
  background: ${colors.mid};
`;

const EyeCell = styled.button`
  display: grid;
  place-items: center;
  width: 61px;
  border-right: 2px solid ${colors.dark};
  background: ${colors.panel};
  color: ${colors.icon};
`;

const LayerItem = styled.div`
  display: flex;
  align-items: center;
  flex: 1;
  padding: 0 31px 0 7px;
  background: #4b4b4b;
  color: #e8e8e8;
  font-weight: 300;

  svg {
    margin-left: auto;
  }
`;

const LayerThumb = styled.div`
  width: 64px;
  height: 52px;
  margin-right: 20px;
  border: 2px solid #6c6c6c;
  background: #fff;
`;

const LayerSpace = styled.div`
  flex: 1;
  background: ${colors.mid};
`;

export default App;
